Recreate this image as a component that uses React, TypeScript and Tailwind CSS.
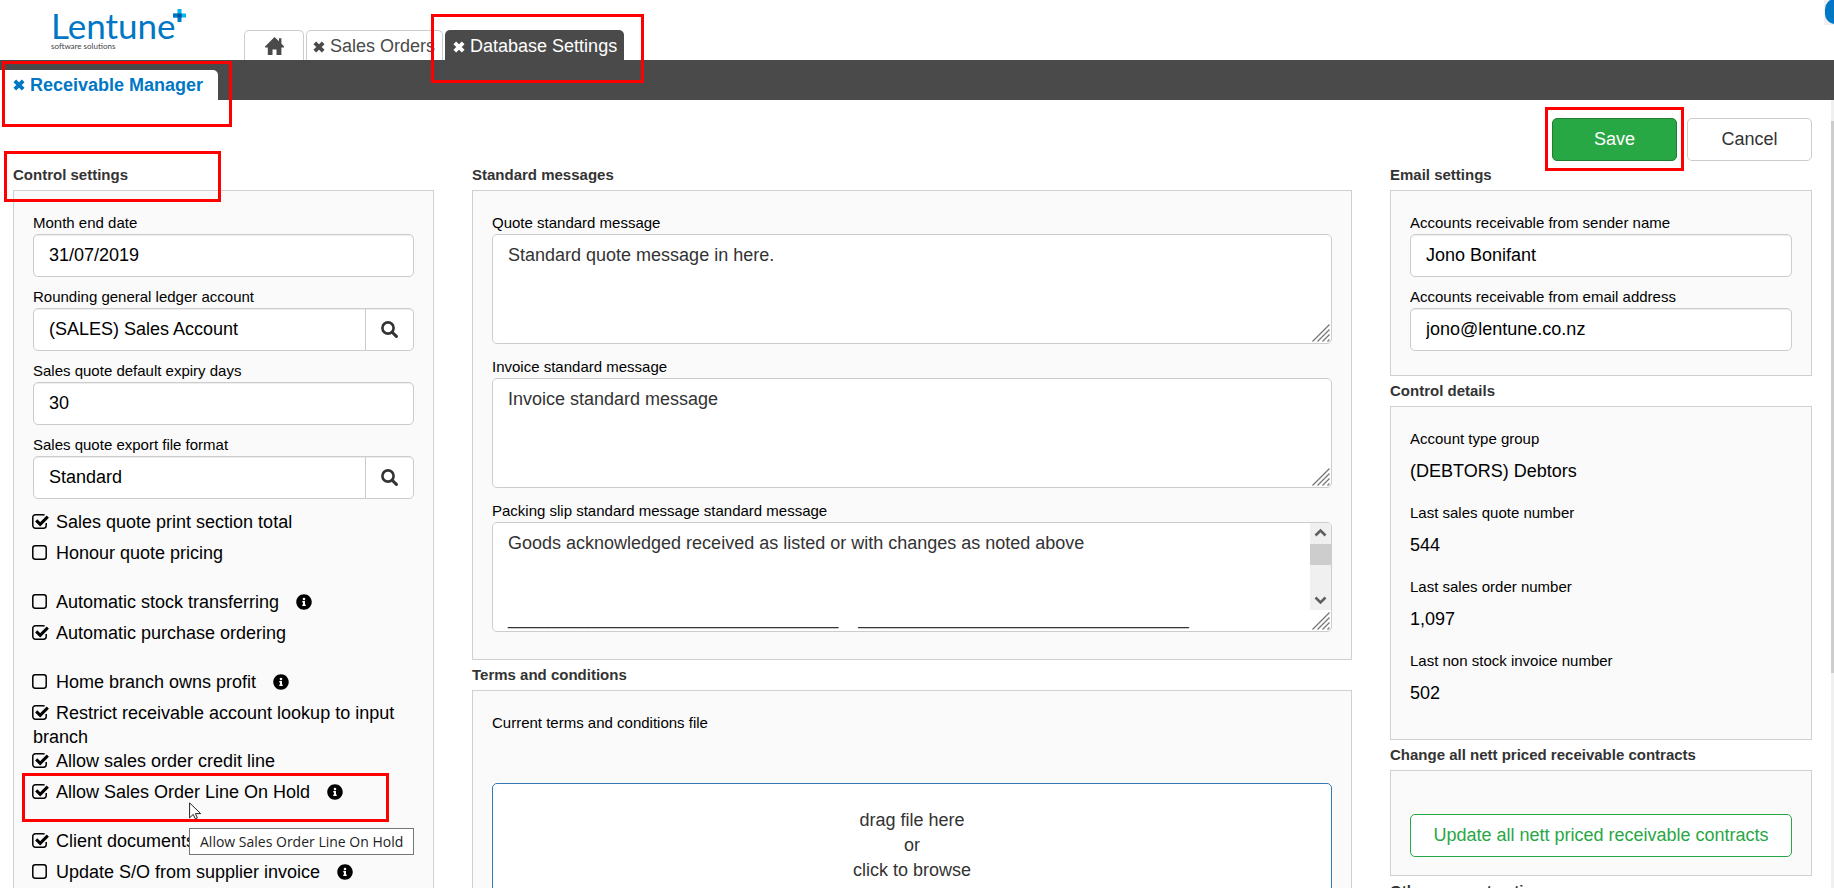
import { useId, useState } from "react";
import type { ReactNode } from "react";
import { FaInfoCircle } from "react-icons/fa";

const packingMessage =
  "Goods acknowledged received as listed or with changes as noted above\n\n\n" +
  "_".repeat(33) +
  "    " +
  "_".repeat(33);

function CloseIcon() {
  return (
    <svg viewBox="0 0 12 12" className="h-3 w-3 shrink-0" aria-hidden="true">
      <path d="M1.800 1.800 10.200 10.200M10.200 1.800 1.800 10.200" stroke="currentColor" strokeWidth="3.8" />
    </svg>
  );
}

function HomeIcon() {
  return (
    <svg viewBox="0 0 19 18" className="h-[18px] w-[19px]" fill="currentColor" aria-hidden="true">
      <path d="M9.5 0 14 4.3V1.2h2.4v5.4L19 9.6v1H16.4V18H11.5v-5.5h-4V18H2.8v-7.4H0v-1z" />
    </svg>
  );
}

function SearchIcon() {
  return (
    <svg viewBox="0 0 17 17" className="h-[17px] w-[17px]" fill="none" stroke="currentColor" aria-hidden="true">
      <circle cx="7" cy="7" r="5.6" strokeWidth="2.6" />
      <path d="m11.2 11.2 4.2 4.2" strokeWidth="3" strokeLinecap="round" />
    </svg>
  );
}

function CheckIcon({ checked }: { checked: boolean }) {
  return (
    <svg viewBox="0 0 17 15" className="mr-[7px] -ml-px inline h-[15px] w-[17px] align-[-1px]" fill="none" stroke="currentColor" aria-hidden="true">
      {checked ? (
        <>
          <path d="M12.6 1.2Q12 .8 11 .8H3.4A2.6 2.6 0 0 0 .8 3.4v8.2a2.6 2.6 0 0 0 2.6 2.6h8.2a2.6 2.6 0 0 0 2.6-2.6V9" strokeWidth="1.5" />
          <path d="m4.2 6.4 4 4L15.8 2.6" strokeWidth="3" />
        </>
      ) : (
        <rect x=".8" y=".8" width="13.4" height="13.4" rx="2.4" strokeWidth="1.5" />
      )}
    </svg>
  );
}

function ResizeGrip() {
  return (
    <svg viewBox="0 0 18 18" className="pointer-events-none absolute right-px bottom-px h-[18px] w-[18px]" stroke="#777" strokeWidth="1.3" aria-hidden="true">
      <path d="M.5 17.5 17.5.5M5.5 17.5 17.5 5.5M10.5 17.5l7-7M15.5 17.5l2-2" />
    </svg>
  );
}

// red callout frame, positioned against its nearest relative parent
function Highlight({ className }: { className: string }) {
  return <span className={`pointer-events-none absolute z-10 border-3 border-[#ff0000] ${className}`} />;
}

const labelClass = "block pt-[9px] text-[15px] leading-[22px]";

function Panel({ title, className = "", children }: { title: string; className?: string; children?: ReactNode }) {
  return (
    <section>
      <h2 className="text-[15px] leading-[30px] font-bold text-[#333]">{title}</h2>
      <div className={`border border-[#d0d0d0] bg-[#fafafa] px-[19px] pt-3 ${className}`}>{children}</div>
    </section>
  );
}

function Field({ label, value, search }: { label: string; value: string; search?: boolean }) {
  const id = useId();
  return (
    <div>
      <label htmlFor={id} className={labelClass}>{label}</label>
      <div className="flex h-[43px] overflow-hidden rounded-[5px] border border-[#ccc] bg-white shadow-[inset_0_1px_1px_rgba(0,0,0,0.075)]">
        <input id={id} defaultValue={value} className="min-w-0 flex-1 px-[15px] text-[18px] outline-none" />
        {search && (
          <button type="button" aria-label={`Search ${label}`} className="flex w-12 items-center justify-center border-l border-[#ccc] text-[#333]">
            <SearchIcon />
          </button>
        )}
      </div>
    </div>
  );
}

function MessageField({ label, value, scroll }: { label: string; value: string; scroll?: boolean }) {
  const id = useId();
  return (
    <div className="mb-[3px]">
      <label htmlFor={id} className={labelClass}>{label}</label>
      <div className="relative h-[110px] overflow-hidden rounded-[5px] border border-[#ccc] bg-white">
        <textarea
          id={id}
          defaultValue={value}
          className="block h-full w-full resize-none overflow-hidden px-[15px] py-2 text-[18px] leading-[25px] text-[#333] outline-none"
        />
        {scroll && (
          <div className="absolute top-0 right-0 h-[87px] w-[21px] bg-[#f0f0f0] pt-[21px]">
            <div className="h-[21px] bg-[#cdcdcd]" />
            <svg viewBox="0 0 21 87" className="absolute inset-0 h-[87px] w-[21px]" fill="none" stroke="#606060" strokeWidth="2.6" aria-hidden="true">
              <path d="m5.5 12.5 5-5 5 5M5.5 74.5l5 5 5-5" />
            </svg>
          </div>
        )}
        <ResizeGrip />
      </div>
    </div>
  );
}

function Detail({ label, value }: { label: string; value: string }) {
  return (
    <div>
      <dt className={labelClass}>{label}</dt>
      <dd className="text-[18px] leading-[43px]">{value}</dd>
    </div>
  );
}

function Check({ label, on = false, info, children }: { label: string; on?: boolean; info?: boolean; children?: ReactNode }) {
  const [checked, setChecked] = useState(on);
  return (
    <div className="relative min-h-[31px] text-[18px] leading-6">
      <label>
        <input type="checkbox" checked={checked} onChange={(e) => setChecked(e.target.checked)} className="sr-only" />
        <CheckIcon checked={checked} />
        {label}
      </label>
      {info && <FaInfoCircle className="ml-[17px] inline h-4 w-4 align-[-2px]" />}
      {children}
    </div>
  );
}

export default function App() {
  return (
    <div className="flex h-screen flex-col overflow-hidden bg-white font-['Liberation_Sans',Arial,sans-serif] text-black">
      <header className="relative flex h-[60px] shrink-0 items-end">
        <div className="relative ml-[51px] h-full w-[193px] pt-[9px] font-[Lato,sans-serif]">
          <div className="text-[35px] leading-8 text-[#0077c5]">Lentune</div>
          <div className="text-[8px] leading-[10px] text-[#444]">software solutions</div>
          <svg viewBox="0 0 13 13" className="absolute top-[9px] left-[122px] h-[13px] w-[13px]" aria-hidden="true">
            <path d="M4.5 0h4v4.5H13v4H0v-4h4.500z" fill="#00b5f0" />
            <path d="M0 4.500h8.500V13h-4V8.500H0z" fill="#0077c5" />
            <path d="M4.500 4.500h4v4h-4z" fill="#00569b" />
          </svg>
        </div>
        <nav className="flex h-[30px] gap-0.5 text-[18px] text-[#4a4a4a]">
          <a href="#home" aria-label="Home" className="flex w-[60px] items-center justify-center rounded-t-[5px] border border-b-0 border-[#ccc]">
            <HomeIcon />
          </a>
          <a href="#sales-orders" className="flex items-center gap-[5px] rounded-t-[5px] border border-b-0 border-[#ccc] pt-0.5 pr-[7px] pl-1.5">
            <CloseIcon />
            Sales Orders
          </a>
          <a href="#database-settings" className="relative flex items-center gap-[5px] rounded-t-[5px] bg-[#4a4a4a] pt-[3px] pr-[7px] pl-2 text-white">
            <CloseIcon />
            Database Settings
            <Highlight className="-top-4 -right-5 -bottom-[23px] -left-[14px]" />
          </a>
        </nav>
        <div className="absolute top-0 right-0 h-[25px] w-2.5 overflow-hidden bg-[#f0f0f0]">
          <div className="-mt-px ml-px h-[25px] w-6 rounded-l-[10px] bg-[#0077c5]" />
        </div>
      </header>

      <div className="flex h-10 shrink-0 items-end bg-[#4a4a4a]">
        <a href="#receivable-manager" className="relative flex h-[30px] items-center gap-[5px] rounded-tr-[5px] bg-white pr-[15px] pl-[13px] text-[18px] font-bold text-[#0077c5]">
          <CloseIcon />
          Receivable Manager
          <Highlight className="-top-[9px] -right-[14px] -bottom-[27px] left-0.5" />
        </a>
      </div>

      <div className="flex min-h-0 flex-1">
        <main className="min-w-0 flex-1 overflow-hidden pr-[19px] pl-[13px]">
          <div className="flex h-[60px] justify-end gap-2.5 pt-[18px] text-[18px]">
            <div className="relative h-[43px] w-[125px]">
              <button type="button" className="h-full w-full rounded-[5px] border border-[#1e7e34] bg-[#28a745] text-white">Save</button>
              <Highlight className="-inset-x-[7px] -top-[11px] -bottom-2.5" />
            </div>
            <button type="button" className="h-[43px] w-[125px] rounded-[5px] border border-[#ccc] bg-white text-[#333]">Cancel</button>
          </div>

          <div className="grid grid-cols-[421fr_880fr_422fr] gap-x-[38px]">
            <div className="relative">
              <Highlight className="-top-[9px] -left-[9px] h-[51px] w-[217px]" />
              <Panel title="Control settings" className="pb-16">
                <Field label="Month end date" value="31/07/2019" />
                <Field label="Rounding general ledger account" value="(SALES) Sales Account" search />
                <Field label="Sales quote default expiry days" value="30" />
                <Field label="Sales quote export file format" value="Standard" search />
                <div className="mt-[11px] space-y-[18px]">
                  <div>
                    <Check label="Sales quote print section total" on />
                    <Check label="Honour quote pricing" />
                  </div>
                  <div>
                    <Check label="Automatic stock transferring" info />
                    <Check label="Automatic purchase ordering" on />
                  </div>
                  <div>
                    <Check label="Home branch owns profit" info />
                    <Check label="Restrict receivable account lookup to input branch" on />
                    <Check label="Allow sales order credit line" on />
                    <Check label="Allow Sales Order Line On Hold" on info>
                      <Highlight className="-top-[7px] -left-[11px] h-[49px] w-[367px]" />
                      <svg viewBox="0 0 13 17" className="absolute top-[22px] left-[156px] h-[17px] w-[13px]" aria-hidden="true">
                        <path d="M.6.900v15l3.600-3.500 2.200 4.500 2-1-2-4.300h5.300z" fill="#fff" stroke="#222" />
                      </svg>
                      <div role="tooltip" className="absolute top-12 left-[156px] z-20 border border-[#767676] bg-white px-2.5 font-['Open_Sans','Noto_Sans',sans-serif] text-[14px] leading-[25px] whitespace-nowrap text-[#222]">
                        Allow Sales Order Line On Hold
                      </div>
                    </Check>
                  </div>
                  <div>
                    <Check label="Client documents" on />
                    <Check label="Update S/O from supplier invoice" info />
                  </div>
                </div>
              </Panel>
            </div>

            <div>
              <Panel title="Standard messages" className="pb-6">
                <MessageField label="Quote standard message" value="Standard quote message in here." />
                <MessageField label="Invoice standard message" value="Invoice standard message" />
                <MessageField label="Packing slip standard message standard message" value={packingMessage} scroll />
              </Panel>
              <Panel title="Terms and conditions" className="pb-7">
                <div className={labelClass}>Current terms and conditions file</div>
                <button type="button" className="mt-[49px] block h-[125px] w-full rounded-[5px] border border-[#337ab7] bg-white text-[18px] leading-[25px] text-[#333]">
                  drag file here
                  <br />
                  or
                  <br />
                  click to browse
                </button>
              </Panel>
            </div>

            <div>
              <Panel title="Email settings" className="pb-6">
                <Field label="Accounts receivable from sender name" value="Jono Bonifant" />
                <Field label="Accounts receivable from email address" value="jono@lentune.co.nz" />
              </Panel>
              <Panel title="Control details" className="pb-6">
                <dl>
                  <Detail label="Account type group" value="(DEBTORS) Debtors" />
                  <Detail label="Last sales quote number" value="544" />
                  <Detail label="Last sales order number" value="1,097" />
                  <Detail label="Last non stock invoice number" value="502" />
                </dl>
              </Panel>
              <Panel title="Change all nett priced receivable contracts" className="pb-[18px]">
                <button type="button" className="mt-[31px] block h-[43px] w-full rounded-[5px] border border-[#28a745] bg-white text-[18px] text-[#28a745]">
                  Update all nett priced receivable contracts
                </button>
              </Panel>
              <Panel title="Other account options" className="pb-6" />
            </div>
          </div>
        </main>
        <div className="w-[3px] bg-[#f0f0f0] pt-[21px]">
          <div className="h-[72%] bg-[#cdcdcd]" />
        </div>
      </div>
    </div>
  );
}
